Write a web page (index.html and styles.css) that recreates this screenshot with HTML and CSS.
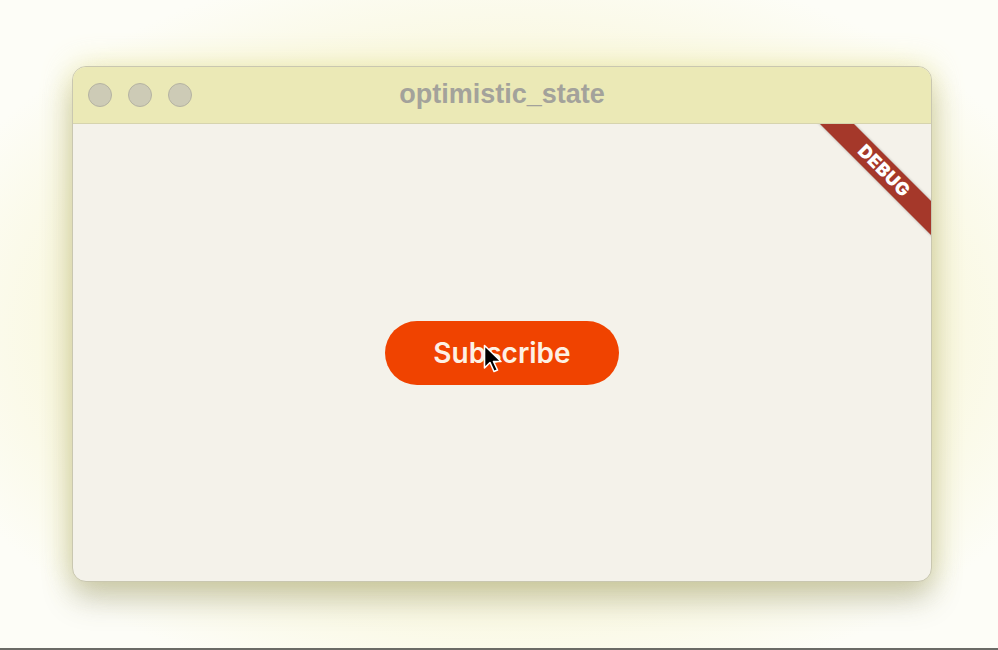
FILE: index.html
```html
<!DOCTYPE html>
<html>
<head>
<meta charset="utf-8">
<link rel="stylesheet" href="styles.css">
</head>
<body>
<div class="stage">
  <div class="window">
    <div class="titlebar">
      <div class="lights">
        <span class="light"></span>
        <span class="light"></span>
        <span class="light"></span>
      </div>
      <div class="title">optimistic_state</div>
    </div>
    <div class="content">
      <button class="subscribe">Subscribe</button>
      <div class="banner">DEBUG</div>
      <svg class="cursor" width="20" height="30" viewBox="0 0 20 30">
        <path d="M1.5 1.5 L1.5 24 L7 18.5 L11 27.5 L14.5 26 L10.5 17.5 L18 17.5 Z" fill="#000" stroke="#fff" stroke-width="1.6" stroke-linejoin="round"/>
      </svg>
    </div>
  </div>
</div>
<div class="baseline"></div>
</body>
</html>
```
FILE: styles.css
```css
html, body {
  margin: 0;
  padding: 0;
}
body {
  width: 998px;
  height: 650px;
  background: #fdfdf7;
  font-family: "Inter", "Liberation Sans", sans-serif;
  overflow: hidden;
  display: flex;
  flex-direction: column;
}
.stage {
  flex: 1;
  padding: 66px 0 0 72px;
  background: radial-gradient(ellipse 600px 380px at 502px 330px, #f3f0bc 0%, #f8f6d8 60%, #fdfdf7 100%);
}
.window {
  width: 860px;
  height: 516px;
  border-radius: 14px;
  background: #f4f2ea;
  border: 1px solid #c9c7b0;
  box-sizing: border-box;
  overflow: hidden;
  display: flex;
  flex-direction: column;
  box-shadow: 0 18px 30px rgba(90, 90, 60, 0.28), 0 0 30px rgba(230, 225, 110, 0.45);
}
.titlebar {
  height: 56px;
  flex: none;
  background: #ebe9b6;
  border-bottom: 1px solid #d6d4ae;
  display: flex;
  align-items: center;
  position: relative;
}
.lights {
  display: flex;
  gap: 16px;
  padding-left: 15px;
}
.light {
  width: 24px;
  height: 24px;
  border-radius: 50%;
  background: #cdcbb6;
  border: 1px solid #b5b3a2;
  box-sizing: border-box;
}
.title {
  position: absolute;
  left: 0;
  right: 0;
  text-align: center;
  font-family: "Liberation Sans", Arial, sans-serif;
  font-weight: bold;
  font-size: 27px;
  color: #a3a29b;
  top: 12px;
}
.content {
  flex: 1;
  position: relative;
  overflow: hidden;
  display: flex;
  align-items: center;
  justify-content: center;
}
.subscribe {
  width: 234px;
  height: 64px;
  border: none;
  border-radius: 32px;
  background: #f04300;
  color: #fdf1e4;
  font-family: "Inter", "Liberation Sans", sans-serif;
  font-weight: 600;
  font-size: 28px;
  padding: 0;
  margin-top: 1px;
}
.banner {
  position: absolute;
  left: 711px;
  top: 35px;
  width: 200px;
  height: 24px;
  line-height: 24px;
  transform: rotate(45deg);
  background: #a5382a;
  color: #ffffff;
  font-family: "Inter", "DejaVu Sans", sans-serif;
  font-weight: 900;
  font-size: 18px;
  letter-spacing: 0.5px;
  text-align: center;
  box-shadow: 0 0 3px rgba(0, 0, 0, 0.3);
}
.cursor {
  position: absolute;
  left: 410px;
  top: 220px;
}
.baseline {
  height: 2px;
  background: #6b6b66;
  flex: none;
}
```
